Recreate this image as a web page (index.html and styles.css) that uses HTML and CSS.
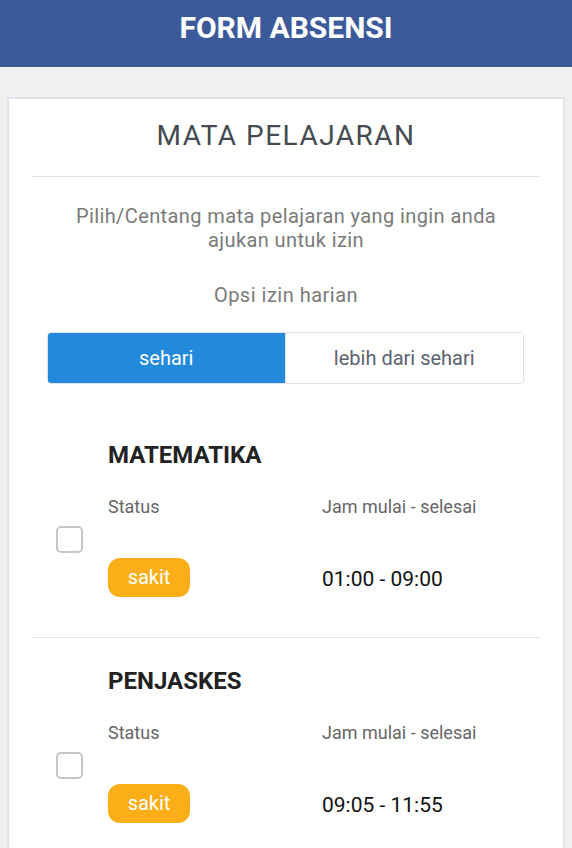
FILE: index.html
```html
<!DOCTYPE html>
<html lang="id">
<head>
<meta charset="utf-8">
<title>Form Absensi</title>
<link rel="stylesheet" href="styles.css">
</head>
<body>
<header class="topbar"><h1 class="topbar-title">FORM ABSENSI</h1></header>
<main class="card">
  <h2 class="card-title">MATA PELAJARAN</h2>
  <p class="desc">Pilih/Centang mata pelajaran yang ingin anda ajukan untuk izin</p>
  <p class="opsi">Opsi izin harian</p>
  <div class="toggle">
    <button class="seg seg-active">sehari</button>
    <button class="seg">lebih dari sehari</button>
  </div>
  <ul class="list">
    <li class="item">
      <span class="check"></span>
      <div class="item-body">
        <h3 class="item-title">MATEMATIKA</h3>
        <div class="details">
          <span class="label">Status</span>
          <span class="label">Jam mulai - selesai</span>
          <span class="badge">sakit</span>
          <span class="time">01:00 - 09:00</span>
        </div>
      </div>
    </li>
    <li class="item">
      <span class="check"></span>
      <div class="item-body">
        <h3 class="item-title">PENJASKES</h3>
        <div class="details">
          <span class="label">Status</span>
          <span class="label">Jam mulai - selesai</span>
          <span class="badge">sakit</span>
          <span class="time">09:05 - 11:55</span>
        </div>
      </div>
    </li>
  </ul>
</main>
</body>
</html>
```

FILE: styles.css
```css
* { box-sizing: border-box; }
html, body { margin: 0; padding: 0; }
body {
  background: #f0f0f0;
  font-family: Roboto, "Liberation Sans", sans-serif;
  overflow: hidden;
}
.topbar {
  background: #3c5a9a;
  height: 67px;
  padding-top: 8px;
}
.topbar-title {
  margin: 0;
  color: #fff;
  font-size: 30px;
  line-height: 40px;
  font-weight: 700;
  text-align: center;
}
.card {
  margin: 30px 7px 0;
  background: #fff;
  border: 2px solid #dfe5ea;
  border-bottom: none;
  padding: 19px 23px 0;
}
.card-title {
  margin: 0;
  font-size: 28px;
  line-height: 36px;
  font-weight: 400;
  letter-spacing: 1.5px;
  color: #464b52;
  text-align: center;
  padding-bottom: 22px;
  border-bottom: 1px solid #e2e2e2;
}
.desc {
  margin: 27px 30px 0;
  font-size: 20px;
  line-height: 24px;
  letter-spacing: 0.4px;
  color: #7a7a7a;
  text-align: center;
}
.opsi {
  margin: 31px 0 0;
  font-size: 20px;
  line-height: 24px;
  letter-spacing: 0.5px;
  color: #7a7a7a;
  text-align: center;
}
.toggle {
  margin: 25px 16px 0 15px;
  display: grid;
  grid-template-columns: 1fr 1fr;
  border: 1px solid #dfe3e8;
  border-radius: 4px;
  overflow: hidden;
  height: 52px;
}
.seg {
  border: none;
  background: #fff;
  font-family: inherit;
  font-size: 20px;
  color: #5b6470;
  padding: 0;
}
.seg-active {
  background: #2289dc;
  color: #fff;
  border-right: 1px solid #dfe3e8;
}
.list {
  list-style: none;
  margin: 28px 0 0;
  padding: 0;
}
.item {
  display: grid;
  grid-template-columns: 27px 1fr;
  column-gap: 25px;
  padding: 29px 0 40px 24px;
  border-bottom: 1px solid #e6e6e6;
}
.check {
  width: 27px;
  height: 27px;
  margin-top: 85px;
  border: 2px solid #c6c6c6;
  border-radius: 5px;
}
.item-title {
  margin: 0;
  font-size: 24px;
  line-height: 28px;
  font-weight: 700;
  color: #222;
}
.details {
  margin-top: 27px;
  display: grid;
  grid-template-columns: 214px 1fr;
  row-gap: 40px;
  align-items: center;
}
.label {
  font-size: 18px;
  line-height: 22px;
  color: #666;
}
.badge {
  width: 82px;
  height: 39px;
  line-height: 39px;
  border-radius: 12px;
  background: #fbae17;
  color: #fff;
  font-size: 20px;
  text-align: center;
}
.time {
  font-size: 21px;
  line-height: 24px;
  padding-top: 2px;
  color: #111;
}
```
